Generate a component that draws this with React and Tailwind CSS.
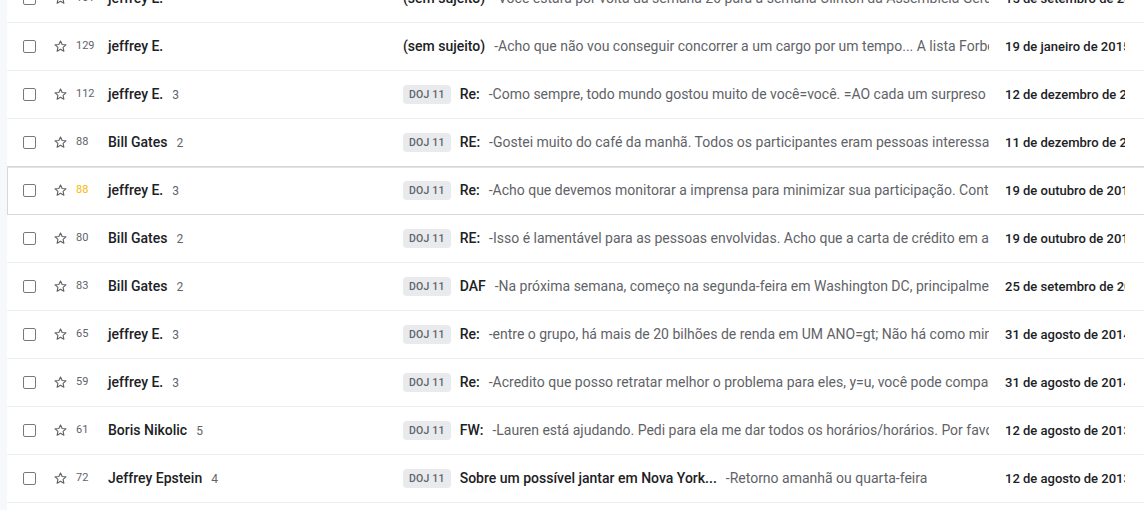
import React from "react";

const rows = [
  { n: "101", sender: "jeffrey E.", c: "", badge: false, subj: "(sem sujeito)", snip: "-Você estará por volta da semana 20 para a semana Clinton da Assembleia Geral das Nações Unidas", date: "15 de setembro de 2015" },
  { n: "129", sender: "jeffrey E.", c: "", badge: false, subj: "(sem sujeito)", snip: "-Acho que não vou conseguir concorrer a um cargo por um tempo... A lista Forbes deste ano", date: "19 de janeiro de 2015" },
  { n: "112", sender: "jeffrey E.", c: "3", badge: true, subj: "Re:", snip: "-Como sempre, todo mundo gostou muito de você=você. =AO cada um surpreso", date: "12 de dezembro de 2014" },
  { n: "88", sender: "Bill Gates", c: "2", badge: true, subj: "RE:", snip: "-Gostei muito do café da manhã. Todos os participantes eram pessoas interessantes e", date: "11 de dezembro de 2014" },
  { n: "88", sender: "jeffrey E.", c: "3", badge: true, subj: "Re:", snip: "-Acho que devemos monitorar a imprensa para minimizar sua participação. Continue assim", date: "19 de outubro de 2014", hover: true },
  { n: "80", sender: "Bill Gates", c: "2", badge: true, subj: "RE:", snip: "-Isso é lamentável para as pessoas envolvidas. Acho que a carta de crédito em anexo", date: "19 de outubro de 2014" },
  { n: "83", sender: "Bill Gates", c: "2", badge: true, subj: "DAF", snip: "-Na próxima semana, começo na segunda-feira em Washington DC, principalmente para", date: "25 de setembro de 2014" },
  { n: "65", sender: "jeffrey E.", c: "3", badge: true, subj: "Re:", snip: "-entre o grupo, há mais de 20 bilhões de renda em UM ANO=gt; Não há como minimizar", date: "31 de agosto de 2014" },
  { n: "59", sender: "jeffrey E.", c: "3", badge: true, subj: "Re:", snip: "-Acredito que posso retratar melhor o problema para eles, y=u, você pode comparar", date: "31 de agosto de 2014" },
  { n: "61", sender: "Boris Nikolic", c: "5", badge: true, subj: "FW:", snip: "-Lauren está ajudando. Pedi para ela me dar todos os horários/horários. Por favor", date: "12 de agosto de 2013" },
  { n: "72", sender: "Jeffrey Epstein", c: "4", badge: true, subj: "Sobre um possível jantar em Nova York...", snip: "-Retorno amanhã ou quarta-feira", date: "12 de agosto de 2013" },
];

function StarIcon() {
  return (
    <svg width="15" height="15" viewBox="0 0 24 24" className="shrink-0">
      <path
        d="M12 3.2l2.6 5.6 6.1.6-4.6 4.1 1.3 6-5.4-3.1-5.4 3.1 1.3-6-4.6-4.1 6.1-.6z"
        fill="none"
        stroke="#5f6368"
        strokeWidth="1.8"
        strokeLinejoin="round"
      />
    </svg>
  );
}

function Row({ r }) {
  return (
    <div
      className={
        "flex items-center h-12 shrink-0 border-b bg-white " +
        (r.hover
          ? "relative z-10 border-b-[#d6d8db] shadow-[0_-1px_0_0_#d3d5d8,inset_0_1px_0_0_#e1e3e6,inset_1px_0_0_0_#d5d7da]"
          : "border-[#eceff1]")
      }
    >
      <div className="w-[16px] shrink-0" />
      <div className="w-[13px] h-[13px] shrink-0 rounded-[2px] border-[1.5px] border-[#767a7f]" />
      <div className="w-[17px] shrink-0" />
      <StarIcon />
      <div className="w-[8px] shrink-0" />
      <div className={"w-[32px] shrink-0 text-[11px] " + (r.hover ? "text-[#f9b704]" : "text-[#5f6368]")}>{r.n}</div>
      <div className="w-[295px] shrink-0 flex items-baseline gap-[9px] whitespace-nowrap">
        <span className="text-[14px] font-medium text-[#202124]">{r.sender}</span>
        {r.c && <span className="text-[12px] text-[#5f6368]">{r.c}</span>}
      </div>
      <div className="w-[586px] shrink-0 flex items-center overflow-hidden whitespace-nowrap">
        {r.badge && (
          <span className="shrink-0 mr-[9px] h-[19px] px-[6px] flex items-center rounded-[4px] bg-[#e8eaed] text-[10.5px] font-medium text-[#5f6368] tracking-[0.2px]">
            DOJ 11
          </span>
        )}
        <span className="shrink-0 text-[14px] font-medium text-[#202124]">{r.subj}</span>
        <span className="shrink-0 ml-[9px] text-[14px] text-[#5f6368]">{r.snip}</span>
      </div>
      <div className="w-[120px] shrink-0 ml-[16px] overflow-hidden text-[13px] font-medium text-[#202124] whitespace-nowrap">{r.date}</div>
    </div>
  );
}

export default function App() {
  return (
    <div className="w-[1144px] h-[510px] overflow-hidden flex bg-white font-['Roboto','Noto_Sans',sans-serif]">
      <div className="w-[7px] shrink-0 bg-[#f6f8fc]" />
      <div className="flex-1 min-w-0 flex flex-col -mt-[25px]">
        {rows.map((r, i) => (
          <Row key={i} r={r} />
        ))}
      </div>
    </div>
  );
}
